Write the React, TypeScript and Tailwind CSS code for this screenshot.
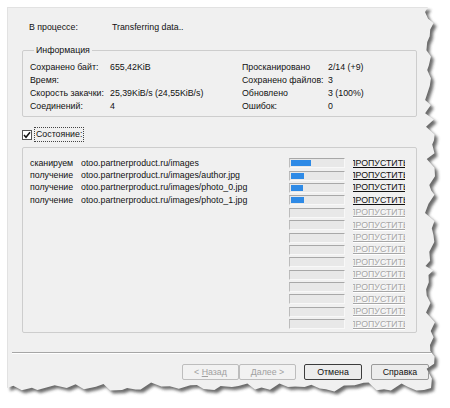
import React from 'react';

type Row = { action: string; url: string; fill: number };

const rows: Row[] = [
  { action: 'сканируем', url: 'otoo.partnerproduct.ru/images', fill: 20 },
  { action: 'получение', url: 'otoo.partnerproduct.ru/images/author.jpg', fill: 13 },
  { action: 'получение', url: 'otoo.partnerproduct.ru/images/photo_0.jpg', fill: 12 },
  { action: 'получение', url: 'otoo.partnerproduct.ru/images/photo_1.jpg', fill: 13 },
  ...Array.from({ length: 10 }, () => ({ action: '', url: '', fill: 0 })),
];

function makeRng(seed: number) {
  let s = seed;
  return () => {
    s = (s * 16807) % 2147483647;
    return s / 2147483647;
  };
}

// torn paper outline of the dialog (right and bottom edges)
function tornPath() {
  const r = makeRng(11);
  let d = 'M7 7 L428 7';
  for (let y = 12; y < 384; y += 4 + r() * 6) {
    d += ` L${(430 + (r() - 0.5) * 10).toFixed(1)} ${y.toFixed(1)}`;
  }
  d += ' L431 388';
  for (let x = 424; x > 10; x -= 5 + r() * 7) {
    d += ` L${x.toFixed(1)} ${(387 + (r() - 0.5) * 9).toFixed(1)}`;
  }
  d += ' L7 388 Z';
  return d;
}

const shape = tornPath();

function TornEdge() {
  return (
    <svg className="absolute inset-0 pointer-events-none" width={450} height={408}>
      <defs>
        <filter id="blur" x="-5%" y="-5%" width="110%" height="110%">
          <feGaussianBlur stdDeviation="1.6" />
        </filter>
        <clipPath id="outside">
          <path clipRule="evenodd" d={`M0 0H450V408H0Z ${shape}`} />
        </clipPath>
      </defs>
      <path fillRule="evenodd" fill="#ffffff" d={`M0 0H450V408H0Z ${shape}`} />
      <g clipPath="url(#outside)">
        <path d={shape} transform="translate(3 3)" fill="#3a3a3a" opacity={0.75} filter="url(#blur)" />
      </g>
    </svg>
  );
}

function InfoRow({ a, b, c, d }: { a: string; b: string; c: string; d: string }) {
  return (
    <div className="grid grid-cols-[80px_132px_86px_1fr] h-[13px] items-center">
      <span>{a}</span>
      <span>{b}</span>
      <span>{c}</span>
      <span>{d}</span>
    </div>
  );
}

function StatusRow({ row }: { row: Row }) {
  const active = row.action !== '';
  return (
    <div className="flex items-center h-[12.4px]">
      <span className="w-[51px] shrink-0">{row.action}</span>
      <span className="w-[208px] shrink-0 whitespace-nowrap overflow-hidden">{row.url}</span>
      <div className="w-[56px] h-[10px] shrink-0 border-t border-l border-t-[#a8a8a8] border-l-[#bcbcbc] border-b border-r border-b-[#f8f8f8] border-r-[#f8f8f8] bg-[#e8e8e8] flex items-center pl-[1px]">
        {row.fill > 0 && <div className="h-[6px] bg-[#2e8ae6]" style={{ width: row.fill }} />}
      </div>
      <div className="ml-[8px] w-[52px] shrink-0 overflow-hidden flex justify-center">
        <span
          className={
            active
              ? 'underline whitespace-nowrap text-[#111]'
              : 'underline whitespace-nowrap text-[#a6a6a6] [text-shadow:1px_1px_0_#ffffff]'
          }
        >
          ПРОПУСТИТЬ
        </span>
      </div>
    </div>
  );
}

export default function App() {
  return (
    <div
      className="relative w-[450px] h-[408px] overflow-hidden bg-white pt-[7px] pl-[7px] text-[8.8px] text-[#111] leading-[13px]"
      style={{ fontFamily: '"Liberation Sans", Arial, sans-serif' }}
    >
      <div className="w-[436px] h-[392px] bg-[#f0f0f0] border-l border-t border-[#e2e2e2] flex flex-col">
        <div className="flex pt-[13px] pl-[21px] h-[26px]">
          <span className="w-[83px]">В процессе:</span>
          <span>Transferring data..</span>
        </div>

        <fieldset className="mt-[10px] ml-[14px] w-[395px] border border-[#cdcdcd] rounded-[2px] pl-[7px] pt-[4px] pb-[3px]">
          <legend className="ml-[4px] px-[2px] leading-[13px]">Информация</legend>
          <InfoRow a="Сохранено байт:" b="655,42KiB" c="Просканировано" d="2/14 (+9)" />
          <InfoRow a="Время:" b="" c="Сохранено файлов:" d="3" />
          <InfoRow a="Скорость закачки:" b="25,39KiB/s (24,55KiB/s)" c="Обновлено" d="3 (100%)" />
          <InfoRow a="Соединений:" b="4" c="Ошибок:" d="0" />
        </fieldset>

        <div className="mt-[11px] ml-[14px] flex items-center h-[13px]">
          <div className="w-[10px] h-[10px] border border-[#555] bg-white flex items-center justify-center">
            <svg width="8" height="8" viewBox="0 0 8 8">
              <path d="M1 4 L3 6.3 L7 1.2" stroke="#111" strokeWidth="1.5" fill="none" />
            </svg>
          </div>
          <span className="ml-[2px] px-[1px] border border-dotted border-[#444]">Состояние:</span>
        </div>

        <div className="mt-[6px] ml-[14px] w-[395px] h-[186px] border border-[#cdcdcd] rounded-[2px] pt-[9px] pl-[7px]">
          {rows.map((row, i) => (
            <StatusRow key={i} row={row} />
          ))}
        </div>

        <div className="mt-[19px] ml-[4px] border-t border-[#a6a6a6] border-b border-b-white" />

        <div className="mt-[10px] flex pl-[174px]">
          <div className="flex">
            <button className="w-[57px] h-[16px] border border-[#bdbdbd] rounded-[2px] bg-[#f2f2f2] text-[#a0a0a0] text-[8.8px] leading-[14px]">
              &lt; <span className="underline">Н</span>азад
            </button>
            <button className="w-[57px] h-[16px] border border-[#bdbdbd] rounded-[2px] bg-[#f2f2f2] text-[#a0a0a0] text-[8.8px] leading-[14px]">
              <span className="underline">Д</span>алее &gt;
            </button>
          </div>
          <button className="ml-[8px] w-[58px] h-[16px] border border-[#3c3c3c] rounded-[2px] bg-[#ececec] text-[8.8px] leading-[14px]">
            Отмена
          </button>
          <button className="ml-[9px] w-[58px] h-[16px] border border-[#9a9a9a] rounded-[2px] bg-[#ececec] text-[8.8px] leading-[14px]">
            Справка
          </button>
        </div>
      </div>
      <TornEdge />
    </div>
  );
}
